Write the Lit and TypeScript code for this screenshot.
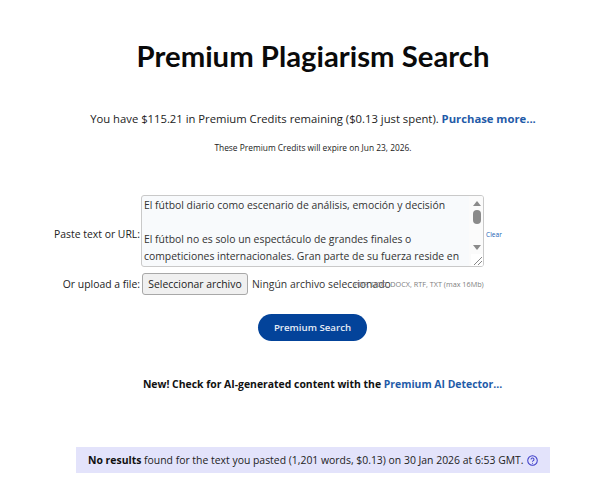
import { LitElement, html, css } from "lit";
import { customElement } from "lit/decorators.js";

@customElement("app-root")
export class AppRoot extends LitElement {
  static styles = css`
    :host {
      display: block;
      width: 604px;
      height: 488px;
      overflow: hidden;
      background: #fff;
      font-family: "Open Sans", sans-serif;
      color: #222;
      font-size: 12px;
    }
    .page { display: flex; flex-direction: column; align-items: center; padding-top: 38px; }
    h1 {
      margin: 0;
      font-family: Lato, sans-serif;
      font-weight: 700;
      font-size: 29.3px;
      line-height: 36px;
      color: #0a0a0a;
      text-align: center;
      width: 604px;
      padding-left: 22px;
      box-sizing: border-box;
    }
    .credits { margin-top: 36px; line-height: 17px; font-size: 11.27px; white-space: nowrap; padding-left: 22px; }
    a { color: #1f5ba8; font-weight: 700; text-decoration: none; }
    .expire { margin-top: 15px; font-size: 8.4px; line-height: 12px; white-space: nowrap; padding-left: 22px; }
    .form {
      margin-top: 41px;
      width: 604px;
      display: grid;
      grid-template-columns: 141px 343px auto;
      row-gap: 6px;
      align-items: center;
      font-size: 10.4px;
    }
    .label { text-align: right; padding-right: 1px; color: #222; white-space: nowrap; }
    .label.first { padding-top: 5px; }
    .ta {
      box-sizing: border-box;
      height: 72px;
      width: 343px;
      border: 1px solid #c9c9c9;
      border-radius: 3px;
      background: #f8fafc;
      position: relative;
      overflow: hidden;
      padding: 1px 14px 0 2px;
      line-height: 17px;
      font-size: 10.4px;
      color: #333;
    }
    .ta p { margin: 0 0 17px; }
    .sb { position: absolute; right: 0; top: 0; bottom: 0; width: 14px; background: #fbfbfb; }
    .up, .down { position: absolute; left: 4px; width: 0; height: 0; border-left: 4px solid transparent; border-right: 4px solid transparent; }
    .up { top: 5px; border-bottom: 5px solid #8a8a8a; }
    .down { top: 49px; border-top: 5px solid #8a8a8a; }
    .thumb { position: absolute; left: 4px; top: 14px; width: 8px; height: 14px; border-radius: 4px; background: #8a8a8a; }
    .grip { position: absolute; right: 0; bottom: 0; width: 12px; height: 12px; background: #fff; }
    .grip svg { display: block; }
    .clear { padding-left: 2px; font-size: 6.6px; color: #1a5fb4; font-weight: 400; padding-top: 7px; }
    .file { display: flex; align-items: center; position: relative; white-space: nowrap; }
    .btn {
      box-sizing: border-box;
      margin-left: 1px;
      width: 106px;
      height: 22px;
      border: 1px solid #a8a8a8;
      border-radius: 3px;
      background: #f0f0f0;
      font: inherit;
      color: #222;
      padding: 0;
    }
    .none { margin-left: 4px; color: #333; }
    .hint { position: absolute; left: 213px; top: 5px; font-size: 7.25px; color: #808080; line-height: 12px; }
    .search {
      margin-top: 19px;
      width: 109px;
      height: 27px;
      border: 0;
      border-radius: 14px;
      background: #03439a;
      color: #e6ecf6;
      font: 600 9.7px "Open Sans", sans-serif;
      padding: 0;
      margin-left: 21px;
    }
    .new { margin-top: 36px; font-weight: 700; font-size: 10.42px; line-height: 14px; white-space: nowrap; color: #111; padding-left: 41px; }
    .result {
      margin-top: 56px;
      margin-left: 22px;
      box-sizing: border-box;
      width: 474px;
      height: 26px;
      background: #e3e3fb;
      display: flex;
      align-items: center;
      padding-left: 12px;
      gap: 3px;
      font-size: 10.42px;
      color: #222;
      white-space: nowrap;
    }
    .result b { color: #111; }
    .result svg { display: block; }
  `;

  render() {
    return html`
      <div class="page">
        <h1>Premium Plagiarism Search</h1>
        <div class="credits">You have $115.21 in Premium Credits remaining ($0.13 just spent). <a href="#">Purchase more...</a></div>
        <div class="expire">These Premium Credits will expire on Jun 23, 2026.</div>
        <div class="form">
          <div class="label first">Paste text or URL:</div>
          <div class="ta">
            <p>El fútbol diario como escenario de análisis, emoción y decisión</p>
            <p>El fútbol no es solo un espectáculo de grandes finales o competiciones internacionales. Gran parte de su fuerza reside en</p>
            <div class="sb"><div class="up"></div><div class="thumb"></div><div class="down"></div></div>
            <div class="grip"><svg width="12" height="12" viewBox="0 0 12 12"><path d="M3 11 L11 3 M7 11 L11 7" stroke="#888" stroke-width="1" fill="none"/></svg></div>
          </div>
          <a class="clear" href="#">Clear</a>
          <div class="label">Or upload a file:</div>
          <div class="file">
            <button class="btn">Seleccionar archivo</button>
            <span class="none">Ningún archivo seleccionado</span>
            <span class="hint">PDF, DOC, DOCX, RTF, TXT (max 16Mb)</span>
          </div>
          <div></div>
        </div>
        <button class="search">Premium Search</button>
        <div class="new">New! Check for AI-generated content with the <a href="#">Premium AI Detector...</a></div>
        <div class="result">
          <span><b>No results</b> found for the text you pasted (1,201 words, $0.13) on 30 Jan 2026 at 6:53 GMT.</span>
          <svg width="11" height="11" viewBox="0 0 12 12" fill="none" stroke="#3a3ac8" stroke-width="1.1">
            <circle cx="6" cy="6" r="5.2"/>
            <path d="M4.4 4.8a1.6 1.6 0 1 1 2.4 1.4c-.5.3-.8.6-.8 1.2"/>
            <path d="M6 8.6v.9"/>
          </svg>
        </div>
      </div>
    `;
  }
}
